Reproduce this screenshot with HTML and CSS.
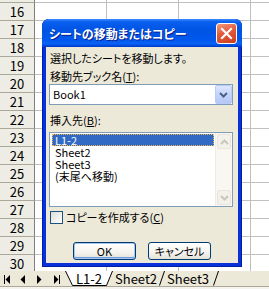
FILE: index.html
```html
<!DOCTYPE html>
<html lang="ja">
<head>
    <meta charset="UTF-8">
    <title>シートの移動またはコピー</title>
    <link rel="stylesheet" href="styles.css">
</head>
<body>
    <div class="excel">
        <!-- Worksheet grid -->
        <div class="sheet">
            <div class="rows">
                <div class="row"><div class="rh">15</div><div class="cell"></div><div class="cell"></div><div class="cell"></div><div class="cell"></div></div>
                <div class="row"><div class="rh">16</div><div class="cell"></div><div class="cell"></div><div class="cell"></div><div class="cell"></div></div>
                <div class="row"><div class="rh">17</div><div class="cell"></div><div class="cell"></div><div class="cell"></div><div class="cell"></div></div>
                <div class="row"><div class="rh">18</div><div class="cell"></div><div class="cell"></div><div class="cell"></div><div class="cell"></div></div>
                <div class="row"><div class="rh">19</div><div class="cell"></div><div class="cell"></div><div class="cell"></div><div class="cell"></div></div>
                <div class="row"><div class="rh">20</div><div class="cell"></div><div class="cell"></div><div class="cell"></div><div class="cell"></div></div>
                <div class="row"><div class="rh">21</div><div class="cell"></div><div class="cell"></div><div class="cell"></div><div class="cell"></div></div>
                <div class="row"><div class="rh">22</div><div class="cell"></div><div class="cell"></div><div class="cell"></div><div class="cell"></div></div>
                <div class="row"><div class="rh">23</div><div class="cell"></div><div class="cell"></div><div class="cell"></div><div class="cell"></div></div>
                <div class="row"><div class="rh">24</div><div class="cell"></div><div class="cell"></div><div class="cell"></div><div class="cell"></div></div>
                <div class="row"><div class="rh">25</div><div class="cell"></div><div class="cell"></div><div class="cell"></div><div class="cell"></div></div>
                <div class="row"><div class="rh">26</div><div class="cell"></div><div class="cell"></div><div class="cell"></div><div class="cell"></div></div>
                <div class="row"><div class="rh">27</div><div class="cell"></div><div class="cell"></div><div class="cell"></div><div class="cell"></div></div>
                <div class="row"><div class="rh">28</div><div class="cell"></div><div class="cell"></div><div class="cell"></div><div class="cell"></div></div>
                <div class="row"><div class="rh">29</div><div class="cell"></div><div class="cell"></div><div class="cell"></div><div class="cell"></div></div>
                <div class="row"><div class="rh">30</div><div class="cell"></div><div class="cell"></div><div class="cell"></div><div class="cell"></div></div>
            </div>
        </div>

        <!-- Sheet tabs -->
        <div class="tabbar">
            <svg class="tabnav" width="64" height="15" viewBox="0 0 64 15">
                <rect x="4" y="4" width="1" height="9" fill="#000"/>
                <polygon points="10,4 5.5,8.5 10,13" fill="#000"/>
                <polygon points="25,4 20.5,8.5 25,13" fill="#000"/>
                <polygon points="37,4 41.5,8.5 37,13" fill="#000"/>
                <polygon points="54,4 58.5,8.5 54,13" fill="#000"/>
                <rect x="59" y="4" width="1" height="9" fill="#000"/>
            </svg>
            <div class="tabs">
                <span class="tab tab-active">
                    <svg class="tab-shape" viewBox="0 0 48 15" preserveAspectRatio="none"><path d="M0.5 0 L7.5 14.5 L41.5 14.5 L47.5 0" fill="#fff" stroke="#000"/></svg>
                    <span class="tab-label"><u>L1-2</u></span>
                </span>
                <span class="tab tab-2">
                    <svg class="tab-shape" viewBox="0 0 52 15" preserveAspectRatio="none"><path d="M46.5 14.5 L51.5 0" fill="none" stroke="#000"/></svg>
                    <span class="tab-label">Sheet2</span>
                </span>
                <span class="tab tab-3">
                    <svg class="tab-shape" viewBox="0 0 54 15" preserveAspectRatio="none"><path d="M48.5 14.5 L53.5 0" fill="none" stroke="#000"/></svg>
                    <span class="tab-label">Sheet3</span>
                </span>
            </div>
        </div>
        <div class="status"></div>

        <!-- Move or copy dialog -->
        <div class="dialog">
            <div class="titlebar">
                <span class="title">シートの移動またはコピー</span>
                <span class="close">
                    <svg width="19" height="19" viewBox="0 0 19 19">
                        <path d="M5 5 L14 14 M14 5 L5 14" stroke="#fff" stroke-width="2.2" stroke-linecap="square"/>
                    </svg>
                </span>
            </div>
            <div class="client">
                <div class="line">選択したシートを移動します。</div>
                <div class="line label-book">移動先ブック名(<u>T</u>):</div>
                <div class="combo">
                    <span class="combo-text">Book1</span>
                    <span class="combo-btn">
                        <svg width="9" height="6" viewBox="0 0 9 6"><path d="M1 1 L4.5 4.5 L8 1" fill="none" stroke="#4d6185" stroke-width="2"/></svg>
                    </span>
                </div>
                <div class="line label-insert">挿入先(<u>B</u>):</div>
                <div class="listbox">
                    <div class="items">
                        <div class="item selected">L1-2</div>
                        <div class="item">Sheet2</div>
                        <div class="item">Sheet3</div>
                        <div class="item">(末尾へ移動)</div>
                    </div>
                    <div class="scrollbar">
                        <span class="sb-btn">
                            <svg width="9" height="6" viewBox="0 0 9 6"><path d="M1 5 L4.5 1.5 L8 5" fill="none" stroke="#c9c7ba" stroke-width="2"/></svg>
                        </span>
                        <span class="sb-btn">
                            <svg width="9" height="6" viewBox="0 0 9 6"><path d="M1 1 L4.5 4.5 L8 1" fill="none" stroke="#c9c7ba" stroke-width="2"/></svg>
                        </span>
                    </div>
                </div>
                <div class="check-row">
                    <span class="checkbox"></span>
                    <span>コピーを作成する(<u>C</u>)</span>
                </div>
                <div class="buttons">
                    <button class="btn btn-default">OK</button>
                    <button class="btn">キャンセル</button>
                </div>
            </div>
        </div>
    </div>
</body>
</html>
```

FILE: styles.css
```css
body {
    margin: 0;
    width: 269px;
    height: 289px;
    overflow: hidden;
    background: #ffffff;
    font-family: "Noto Sans CJK JP", sans-serif;
}
.excel {
    position: relative;
    width: 269px;
    height: 289px;
}
/* Worksheet */
.sheet {
    height: 271px;
    overflow: hidden;
}
.rows {
    margin-top: -15px;
}
.row {
    display: flex;
    height: 18px;
}
.rh {
    flex: none;
    width: 35px;
    box-sizing: border-box;
    border-right: 1px solid #808080;
    border-bottom: 1px solid #aca899;
    background: #eeede5;
    font-size: 13px;
    line-height: 17px;
    text-align: center;
    color: #000000;
}
.cell {
    flex: none;
    width: 72px;
    box-sizing: border-box;
    border-right: 1px solid #c0c0c0;
    border-bottom: 1px solid #c0c0c0;
}
/* Sheet tabs */
.tabbar {
    display: flex;
    height: 15px;
    background: #ece9d8;
}
.tabnav {
    flex: none;
    display: block;
}
.tabs {
    display: flex;
    margin-left: 1px;
}
.tab {
    position: relative;
    height: 15px;
    font-size: 13px;
    line-height: 15px;
    color: #000000;
}
.tab-shape {
    position: absolute;
    left: 0;
    top: 0;
    width: 100%;
    height: 100%;
}
.tab-label {
    position: relative;
}
.tab-active {
    width: 48px;
    padding-left: 11px;
    box-sizing: border-box;
}
.tab-2 {
    width: 52px;
    padding-left: 2px;
    box-sizing: border-box;
}
.tab-3 {
    width: 54px;
    padding-left: 2px;
    box-sizing: border-box;
}
.status {
    height: 3px;
    box-sizing: border-box;
    border-top: 1px solid #aca899;
    background: #f4f3ee;
}
/* Dialog window */
.dialog {
    position: absolute;
    left: 42px;
    top: 19px;
    width: 200px;
    height: 248px;
    display: flex;
    flex-direction: column;
    background: #0831d9;
    border-radius: 7px 7px 0 0;
    box-shadow: inset 0 0 0 1px #001ea0;
}
.titlebar {
    display: flex;
    align-items: center;
    height: 28px;
    flex: none;
    padding-left: 7px;
    border-radius: 7px 7px 0 0;
    background: linear-gradient(180deg, #3a8cff 0%, #0a5ff0 10%, #0054e3 40%, #0058ee 75%, #0a62f5 88%, #0048d8 96%, #0038c8 100%);
}
.title {
    color: #ffffff;
    font-size: 12px;
    font-weight: bold;
    font-feature-settings: "palt";
    text-shadow: 1px 1px 0 #0a1e8a;
}
.close {
    display: flex;
    align-items: center;
    justify-content: center;
    width: 19px;
    height: 19px;
    margin-left: auto;
    margin-right: 5px;
    border: 1px solid #ffffff;
    border-radius: 3px;
    background: linear-gradient(160deg, #f29a7c 0%, #e2593a 45%, #cc3f1e 100%);
}
.close svg {
    display: block;
}
.client {
    flex: 1;
    margin: 0 4px 4px;
    padding: 4px 5px 0 3px;
    background: #ece9d8;
    font-size: 11px;
    font-feature-settings: "palt";
    color: #000000;
}
.line {
    line-height: 14px;
    padding-left: 1px;
}
.label-book {
    margin-top: 4px;
}
.combo {
    display: flex;
    height: 21px;
    margin-top: 1px;
    box-sizing: border-box;
    border: 1px solid #7f9db9;
    background: #ffffff;
}
.combo-text {
    flex: 1;
    padding-left: 3px;
    line-height: 19px;
}
.combo-btn {
    display: flex;
    align-items: center;
    justify-content: center;
    width: 17px;
    box-sizing: border-box;
    border: 1px solid #b6cbf7;
    border-radius: 2px;
    background: linear-gradient(180deg, #dce6fd 0%, #c4d5fb 50%, #b4c8f6 100%);
}
.label-insert {
    margin-top: 8px;
}
.listbox {
    display: flex;
    height: 75px;
    margin-top: 5px;
    box-sizing: border-box;
    border: 1px solid #7f9db9;
    background: #ffffff;
}
.items {
    flex: 1;
    padding: 1px 1px 0 2px;
}
.item {
    height: 12px;
    line-height: 12px;
    padding-left: 3px;
}
.item.selected {
    background: #316ac5;
    color: #ffffff;
    outline: 1px dotted #f3b54a;
    outline-offset: -1px;
}
.scrollbar {
    display: flex;
    flex-direction: column;
    justify-content: space-between;
    width: 17px;
    padding: 1px 0;
    box-sizing: border-box;
    background: #f8f7f2;
    border-left: 1px solid #eeede5;
}
.sb-btn {
    display: flex;
    align-items: center;
    justify-content: center;
    height: 15px;
    box-sizing: border-box;
    margin: 0 1px;
    border: 1px solid #e8e6dc;
    border-radius: 2px;
    background: #f2f1ea;
}
.check-row {
    display: flex;
    align-items: center;
    gap: 3px;
    height: 14px;
    margin-top: 3px;
    line-height: 14px;
    padding-left: 1px;
}
.checkbox {
    width: 13px;
    height: 13px;
    box-sizing: border-box;
    border: 1px solid #1c5180;
    background: linear-gradient(135deg, #dcdcd7 0%, #ffffff 100%);
}
.buttons {
    display: flex;
    gap: 12px;
    margin-top: 18px;
    padding-left: 24px;
}
.btn {
    width: 63px;
    height: 18px;
    padding: 0;
    border: 1px solid #003c74;
    border-radius: 3px;
    background: linear-gradient(180deg, #ffffff 0%, #f4f3ee 60%, #e3e0d5 100%);
    font-family: "Noto Sans CJK JP", sans-serif;
    font-size: 11px;
    font-feature-settings: "palt";
    line-height: 16px;
    color: #000000;
}
.btn-default {
    box-shadow: inset 0 0 0 1px #a9c4f0, inset 0 -1px 0 1px #6f9be0;
}
```
